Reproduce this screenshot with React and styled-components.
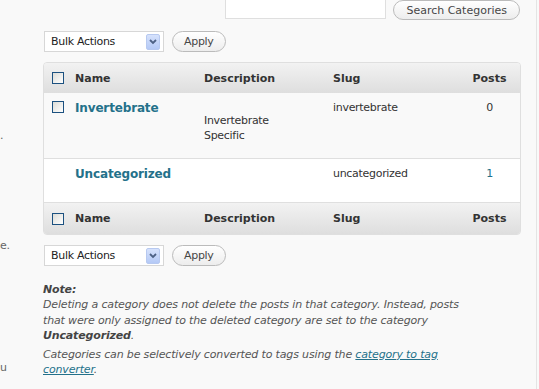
import React from "react";
import styled, { createGlobalStyle } from "styled-components";

const Global = createGlobalStyle`
  html, body { margin: 0; padding: 0; background: #f9f9f9; }
  body {
    font-family: "DejaVu Sans", Verdana, sans-serif;
    font-size: 11px;
    color: #333;
    letter-spacing: -0.3px;
  }
  * { box-sizing: border-box; }
`;

const Page = styled.div`
  width: 537px;
  height: 389px;
  border-right: 1px solid #e4e4e4;
  display: flex;
  overflow: hidden;
`;

const LeftCol = styled.div`
  width: 43px;
  flex: none;
  display: flex;
  flex-direction: column;
`;

const Fragment = styled.div`
  height: 14px;
  line-height: 14px;
  margin-top: ${(p) => p.$mt}px;
  padding-left: ${(p) => p.$pl || 0}px;
  white-space: nowrap;
  color: #666;
  font-style: ${(p) => (p.$italic ? "italic" : "normal")};
`;

const Main = styled.div`
  width: 478px;
  flex: none;
  display: flex;
  flex-direction: column;
`;

const SearchRow = styled.div`
  display: flex;
  justify-content: flex-end;
  align-items: flex-start;
  gap: 7px;
  margin-top: -3px;
  padding-right: 1px;
`;

const SearchInput = styled.div`
  width: 161px;
  height: 22px;
  background: #fff;
  border: 1px solid #dfdfdf;
`;

const PillButton = styled.button`
  font-family: inherit;
  font-size: 11px;
  letter-spacing: ${(p) => (p.$wide ? "0" : "-0.3px")};
  color: #464646;
  height: ${(p) => p.$h || 21}px;
  margin-top: ${(p) => p.$mt || 0}px;
  padding: 0 ${(p) => (p.$wide ? 12 : 11)}px;
  border: 1px solid #bbb;
  border-radius: 11px;
  background: linear-gradient(#ffffff, #ededed);
  line-height: 1;
  cursor: pointer;
`;

const ActionsRow = styled.div`
  display: flex;
  align-items: center;
  gap: 8px;
  margin-top: ${(p) => p.$mt}px;
  padding-left: 1px;
`;

const Select = styled.div`
  width: 120px;
  height: 21px;
  background: #fff;
  border: 1px solid #d7d7d7;
  display: flex;
  align-items: center;
  justify-content: space-between;
  padding: 0 3px 0 6px;
  color: #222;
`;

const Arrow = styled.span`
  width: 14px;
  height: 16px;
  border-radius: 2px;
  border: 1px solid #b7c9f0;
  background: linear-gradient(#d6e2fc, #b4c9f6);
  display: flex;
  align-items: center;
  justify-content: center;
`;

const Table = styled.div`
  margin-top: 10px;
  border: 1px solid #dfdfdf;
  border-radius: 4px;
  overflow: hidden;
  background: #f9f9f9;
`;

const Grid = styled.div`
  display: grid;
  grid-template-columns: 31px 129px 129px 126px 1fr;
`;

const HeadRow = styled(Grid)`
  height: ${(p) => p.$h}px;
  align-items: center;
  background: linear-gradient(#f2f2f2, #dedede);
  font-weight: bold;
  letter-spacing: 0;
  color: #333;
  border-top: ${(p) => (p.$bordered ? "1px solid #dfdfdf" : "none")};
`;

const BodyRow = styled(Grid)`
  height: ${(p) => p.$h}px;
  align-items: start;
  padding-top: 7px;
  background: ${(p) => (p.$alt ? "#f9f9f9" : "#ffffff")};
  border-top: ${(p) => (p.$bordered ? "1px solid #dfdfdf" : "none")};
  line-height: 16px;
`;

const CheckCell = styled.div`
  padding-left: 8px;
  padding-top: ${(p) => p.$pt || 0}px;
  display: flex;
`;

const Check = styled.span`
  width: 12px;
  height: 12px;
  border: 1px solid #1c5180;
  background: linear-gradient(135deg, #dcdcd7, #ffffff);
  display: block;
`;

const Cell = styled.div`
  text-align: ${(p) => (p.$center ? "center" : "left")};
`;

const RowTitle = styled.a`
  font-weight: bold;
  font-size: 12px;
  letter-spacing: -0.15px;
  color: #24718a;
  text-decoration: none;
`;

const Desc = styled.div`
  margin-top: 13px;
  line-height: 15px;
`;

const CountLink = styled.a`
  color: #24718a;
  text-decoration: none;
`;

const Notes = styled.div`
  margin-top: 16px;
  font-style: italic;
  color: #555;
  line-height: 15.4px;
  letter-spacing: -0.15px;
`;

const Para = styled.p`
  margin: ${(p) => p.$mt || 0}px 0 0;
`;

const Strong = styled.strong`
  color: #444;
`;

const TextLink = styled.a`
  color: #24718a;
  text-decoration: underline;
`;

const Chevron = () => (
  <svg width="8" height="6" viewBox="0 0 8 6">
    <path d="M1 1 L4 4 L7 1" fill="none" stroke="#4d6185" strokeWidth="1.8" />
  </svg>
);

const Actions = ({ mt }) => (
  <ActionsRow $mt={mt}>
    <Select>
      <span>Bulk Actions</span>
      <Arrow>
        <Chevron />
      </Arrow>
    </Select>
    <PillButton>Apply</PillButton>
  </ActionsRow>
);

const Header = ({ h, bordered }) => (
  <HeadRow $h={h} $bordered={bordered}>
    <CheckCell>
      <Check />
    </CheckCell>
    <Cell>Name</Cell>
    <Cell>Description</Cell>
    <Cell>Slug</Cell>
    <Cell $center>Posts</Cell>
  </HeadRow>
);

export default function App() {
  return (
    <>
      <Global />
      <Page>
        <LeftCol>
          <Fragment $mt={129}>.</Fragment>
          <Fragment $mt={96}>e.</Fragment>
          <Fragment $mt={108}>u</Fragment>
        </LeftCol>
        <Main>
          <SearchRow>
            <SearchInput />
            <PillButton $h={20} $mt={3} $wide>
              Search Categories
            </PillButton>
          </SearchRow>
          <Actions mt={11} />
          <Table>
            <Header h={30} />
            <BodyRow $h={65} $alt>
              <CheckCell $pt={1}>
                <Check />
              </CheckCell>
              <Cell>
                <RowTitle href="#">Invertebrate</RowTitle>
              </Cell>
              <Cell>
                <Desc>
                  Invertebrate
                  <br />
                  Specific
                </Desc>
              </Cell>
              <Cell>invertebrate</Cell>
              <Cell $center>0</Cell>
            </BodyRow>
            <BodyRow $h={44} $bordered>
              <CheckCell />
              <Cell>
                <RowTitle href="#">Uncategorized</RowTitle>
              </Cell>
              <Cell />
              <Cell>uncategorized</Cell>
              <Cell $center>
                <CountLink href="#">1</CountLink>
              </Cell>
            </BodyRow>
            <Header h={32} bordered />
          </Table>
          <Actions mt={10} />
          <Notes>
            <Para>
              <Strong>Note:</Strong>
              <br />
              Deleting a category does not delete the posts in that category. Instead, posts
              <br />
              that were only assigned to the deleted category are set to the category
              <br />
              <Strong>Uncategorized</Strong>.
            </Para>
            <Para $mt={3}>
              Categories can be selectively converted to tags using the{" "}
              <TextLink href="#">category to tag</TextLink>
              <br />
              <TextLink href="#">converter</TextLink>.
            </Para>
          </Notes>
        </Main>
      </Page>
    </>
  );
}
